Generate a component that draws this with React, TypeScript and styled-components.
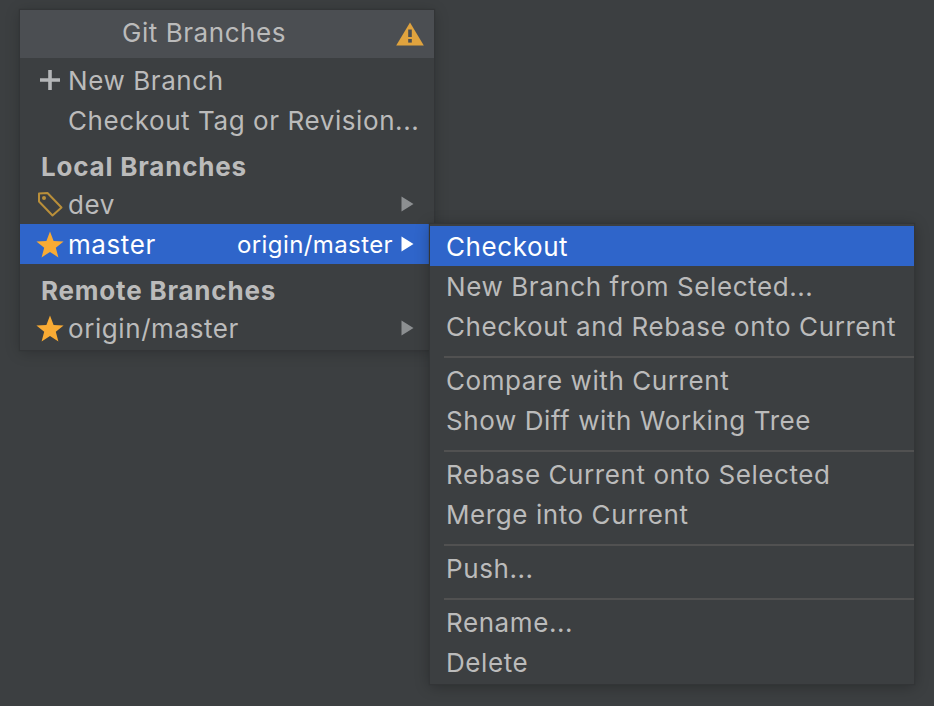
import * as React from 'react'
import styled, { createGlobalStyle } from 'styled-components'

const GlobalStyle = createGlobalStyle`
    html, body {
        margin: 0;
        padding: 0;
        background: #3c3f41;
    }
    body {
        font-family: Inter, "Liberation Sans", sans-serif;
    }
`

const Page = styled.div`
    width: 934px;
    height: 706px;
    box-sizing: border-box;
    padding: 10px 0 0 20px;
    overflow: hidden;
    background: #3c3f41;
`

const BranchPopup = styled.div`
    position: relative;
    width: 414px;
    height: 340px;
    background: #3c3f41;
    box-shadow: 0 0 1px 1px #333537, 0 2px 14px rgba(0, 0, 0, 0.22);
`

const PopupHeader = styled.div`
    position: relative;
    height: 48px;
    display: flex;
    align-items: center;
    justify-content: center;
    padding: 0 46px 4px 0;
    box-sizing: border-box;
    margin-bottom: 2px;
    background: #4b4e52;
    color: #bbbbbb;
    font-size: 26px;
    letter-spacing: 0.55px;
`

const HeaderWarning = styled.svg`
    position: absolute;
    top: 12px;
    right: 10px;
`

const Row = styled.div<{ selected?: boolean }>`
    height: 40px;
    box-sizing: border-box;
    display: flex;
    align-items: center;
    color: ${props => props.selected ? '#ffffff' : '#bbbbbb'};
    background: ${props => props.selected ? '#2f65ca' : 'transparent'};
    font-size: 26px;
    letter-spacing: 0.58px;
    white-space: nowrap;
`

const BranchRow = styled(Row)`
    width: 410px;
    padding-left: 13px;
`

const IconSlot = styled.span`
    width: 35px;
    height: 32px;
    flex: none;
    padding-right: 1px;
    box-sizing: border-box;
    display: flex;
    align-items: center;
    justify-content: center;
`

const RowLabel = styled.span`
    flex: 1;
`

const TrackedBranch = styled.span`
    margin-right: 8px;
    font-size: 24px;
    letter-spacing: 0.4px;
`

const Arrow = styled.svg`
    flex: none;
    margin-right: 16px;
`

const SectionTitle = styled.div`
    height: 44px;
    box-sizing: border-box;
    padding: 8px 0 0 21px;
    display: flex;
    align-items: center;
    color: #bbbbbb;
    font-size: 26px;
    font-weight: 700;
    letter-spacing: 0.8px;
`

const ActionPopup = styled.div`
    position: absolute;
    left: 410px;
    top: 214px;
    width: 484px;
    height: 460px;
    box-sizing: border-box;
    padding-top: 2px;
    background: #3c3f41;
    box-shadow: 0 0 1px 1px #333537, 0 2px 14px rgba(0, 0, 0, 0.3);
`

const ActionRow = styled(Row)`
    padding-left: 16px;
`

const Divider = styled.div`
    height: 2px;
    margin: 10px 0 2px 14px;
    background: #515151;
`

const Star = () => (
    <svg width="28" height="27" viewBox="0 0 28 27">
        <path
            d="M14 0.5 L17.6 9.9 L27.6 10.4 L19.8 16.7 L22.4 26.4 L14 20.9 L5.6 26.4 L8.2 16.7 L0.4 10.4 L10.4 9.9 Z"
            fill="#f9ab34"
        />
    </svg>
)

const Tag = () => (
    <svg width="26" height="26" viewBox="0 0 26 26" fill="none">
        <path
            d="M2 2.5 L10.5 2 L24.5 16.5 L15.5 24.5 L2 10.5 Z"
            stroke="#b98f3a"
            strokeWidth="2"
            strokeLinejoin="round"
        />
        <circle cx="7" cy="7" r="2" fill="#b98f3a"/>
    </svg>
)

const Plus = () => (
    <svg width="20" height="20" viewBox="0 0 20 20">
        <path d="M8.2 0 H11.8 V8.2 H20 V11.8 H11.8 V20 H8.2 V11.8 H0 V8.2 H8.2 Z" fill="#b4b6b8"/>
    </svg>
)

const SubmenuArrow = ({ selected }: { selected?: boolean }) => (
    <Arrow width="13" height="16" viewBox="0 0 13 16">
        <path d="M0.5 0.5 L12.5 8 L0.5 15.5 Z" fill={selected ? '#ffffff' : '#8c8f91'}/>
    </Arrow>
)

const ACTION_GROUPS = [
    ['New Branch from Selected...', 'Checkout and Rebase onto Current'],
    ['Compare with Current', 'Show Diff with Working Tree'],
    ['Rebase Current onto Selected', 'Merge into Current'],
    ['Push...'],
    ['Rename...', 'Delete'],
]

export default function App() {
    return (
        <Page>
            <GlobalStyle/>
            <BranchPopup>
                <PopupHeader>
                    Git Branches
                    <HeaderWarning width="28" height="24" viewBox="0 0 28 24">
                        <path d="M14 0.5 L27.8 23.5 H0.2 Z" fill="#e0a33e"/>
                        <rect x="12.2" y="7.5" width="3.6" height="7.5" fill="#4b4e52"/>
                        <rect x="12.2" y="17" width="3.6" height="3.6" fill="#4b4e52"/>
                    </HeaderWarning>
                </PopupHeader>
                <BranchRow>
                    <IconSlot><Plus/></IconSlot>
                    <RowLabel>New Branch</RowLabel>
                </BranchRow>
                <BranchRow>
                    <IconSlot/>
                    <RowLabel>Checkout Tag or Revision...</RowLabel>
                </BranchRow>
                <SectionTitle>Local Branches</SectionTitle>
                <BranchRow>
                    <IconSlot><Tag/></IconSlot>
                    <RowLabel>dev</RowLabel>
                    <SubmenuArrow/>
                </BranchRow>
                <BranchRow selected>
                    <IconSlot><Star/></IconSlot>
                    <RowLabel>master</RowLabel>
                    <TrackedBranch>origin/master</TrackedBranch>
                    <SubmenuArrow selected/>
                </BranchRow>
                <SectionTitle>Remote Branches</SectionTitle>
                <BranchRow>
                    <IconSlot><Star/></IconSlot>
                    <RowLabel>origin/master</RowLabel>
                    <SubmenuArrow/>
                </BranchRow>
                <ActionPopup>
                    <ActionRow selected>Checkout</ActionRow>
                    {ACTION_GROUPS.map((group, index) => (
                        <React.Fragment key={group[0]}>
                            {index > 0 && <Divider/>}
                            {group.map(label => (
                                <ActionRow key={label}>{label}</ActionRow>
                            ))}
                        </React.Fragment>
                    ))}
                </ActionPopup>
            </BranchPopup>
        </Page>
    )
}
